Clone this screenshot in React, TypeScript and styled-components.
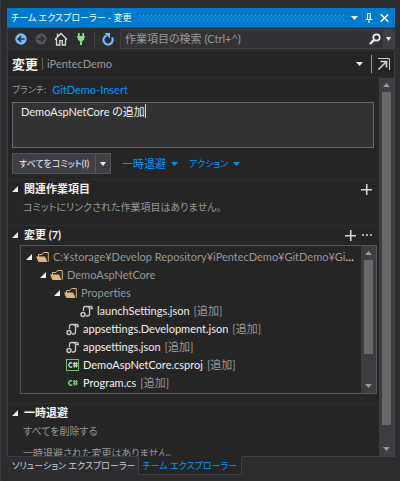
import React, { useEffect, useRef, useState } from "react";
import styled, { createGlobalStyle, css } from "styled-components";

const sans = 'Lato, "Noto Sans CJK JP", sans-serif';

const GlobalStyle = createGlobalStyle`
  *, *::before, *::after { box-sizing: border-box; }
  body {
    margin: 0;
    background: #2d2d30;
    color: #999999;
    font-family: ${sans};
    font-size: 11px;
    line-height: 18px;
    font-feature-settings: "palt";
  }
  button, input, textarea { font: inherit; font-feature-settings: inherit; color: inherit; }
  button { background: none; border: 0; padding: 0; cursor: pointer; }
  a { color: #0097fb; text-decoration: none; }
  ul { list-style: none; margin: 0; padding: 0; }
  h1, h2, p { margin: 0; }
  svg { display: block; flex: none; }
`;

const Page = styled.div`
  display: flex;
  flex-direction: column;
  height: 100vh;
  padding: 8px 5px 5px 6px;
  border-left: 1px solid #3a3a3f;
  white-space: nowrap;
`;

const TitleBar = styled.header`
  display: flex;
  align-items: center;
  gap: 7px;
  height: 20px;
  flex: none;
  padding: 0 6px 0 4px;
  background: #007acc;
  border-bottom: 1px solid #1c5d8c;
  color: #ffffff;
`;

const Title = styled.h1`
  font-size: 9px;
  font-weight: 400;
`;

const Grip = styled.div`
  flex: 1;
  height: 5px;
  background-image: conic-gradient(from 270deg at 1px 1px, #4da3dc 90deg, transparent 0),
    conic-gradient(from 270deg at 1px 1px, #4da3dc 90deg, transparent 0);
  background-size: 4px 4px;
  background-position: 0 0, 2px 2px;
`;

const TitleButtons = styled.div`
  display: flex;
  align-items: center;
  gap: 7px;
`;

const ToolBar = styled.div`
  display: flex;
  align-items: center;
  height: 22px;
  flex: none;
  padding-left: 6px;
  border-left: 1px solid #3f3f46;
`;

const ToolButtons = styled.div`
  display: flex;
  align-items: center;
  gap: 6px;
`;

const Separator = styled.span`
  width: 1px;
  height: 15px;
  background: #46464a;
`;

const SearchBox = styled.label`
  display: flex;
  align-items: center;
  flex: 1;
  min-width: 0;
  height: 20px;
  margin-left: 5px;
  background: #333337;
  border: 1px solid #3f3f46;

  input {
    flex: 1;
    min-width: 0;
    height: 18px;
    padding: 0 4px;
    border: 0;
    outline: 0;
    background: none;
  }
  input::placeholder { color: #999999; opacity: 1; }
`;

const SearchDrop = styled.button`
  display: grid;
  place-items: center;
  width: 11px;
  height: 18px;
  margin-left: 2px;
  background: #3f3f46;
  color: #f1f1f1;
`;

const Body = styled.main`
  display: flex;
  flex-direction: column;
  flex: 1;
  min-height: 0;
  background: #252526;
  border: 1px solid #3f3f46;
  border-top-color: #2d2d30;
`;

const PageHeader = styled.div`
  display: flex;
  align-items: center;
  height: 27px;
  flex: none;
  padding: 0 4px;
  border-bottom: 1px solid #2d2d30;
`;

const PageName = styled.h1`
  font-size: 13px;
  font-weight: 700;
  color: #f1f1f1;
`;

const ProjectName = styled.span`
  font-size: 11px;
`;

const Bar = styled.span`
  width: 1px;
  height: 12px;
  margin: 0 4px;
  background: #66666a;
`;

const HeaderButtons = styled.div`
  display: flex;
  align-items: center;
  gap: 5px;
  margin-left: auto;

  ${Bar} { height: 18px; margin: 0 0 0 3px; background: #999999; }
`;

const Scroller = styled.div`
  display: flex;
  flex: 1;
  min-height: 0;
`;

const Content = styled.div`
  flex: 1;
  min-width: 0;
  overflow: hidden;
`;

const ScrollBar = styled.div`
  display: flex;
  flex-direction: column;
  align-items: center;
  gap: 5px;
  width: 15px;
  flex: none;
  padding: 5px 0;
  background: #3e3e42;
`;

const Track = styled.div`
  flex: 1;
  width: 9px;
`;

const Thumb = styled.div<{ $size: number }>`
  height: ${(p) => p.$size}%;
  background: #686868;
`;

const CommitForm = styled.form`
  display: flex;
  flex-direction: column;
  padding: 3px 5px 5px 4px;
  border-bottom: 1px solid #2d2d30;
`;

const Branch = styled.p`
  display: flex;
  gap: 6px;
`;

const BranchLabel = styled.span`
  font-size: 9px;
`;

const MessageBox = styled.div`
  position: relative;
  margin-top: 3px;
`;

const Message = styled.textarea`
  display: block;
  width: 100%;
  height: 46px;
  padding: 0 8px;
  resize: none;
  outline: 0;
  background: #333333;
  border: 1px solid #686870;
  color: #f1f1f1;
`;

const TextCursor = styled.span`
  position: absolute;
  top: 2px;
  width: 1px;
  height: 14px;
  background: #d8d8d8;

  ${Message}:focus + & { display: none; }
`;

const Actions = styled.div`
  display: flex;
  align-items: center;
  gap: 11px;
  margin-top: 5px;
`;

const SplitButton = styled.div`
  display: flex;
  height: 21px;
  background: #3f3f46;
  border: 1px solid #555555;
  color: #f1f1f1;
`;

const CommitButton = styled.button`
  padding: 0 6px;
  font-size: 9px;
`;

const SplitDrop = styled.button`
  display: grid;
  place-items: center;
  width: 15px;
  border-left: 1px solid #555555;
`;

const MenuButton = styled.button<{ $compact?: boolean }>`
  display: flex;
  align-items: center;
  gap: 5px;
  color: #0097fb;
  font-size: ${(p) => (p.$compact ? 9 : 11)}px;
`;

const Section = styled.section`
  padding: 0 0 9px 4px;

  & + & { border-top: 1px solid #2d2d30; }
`;

const SectionHead = styled.div`
  display: flex;
  align-items: center;
  gap: 6px;
  height: 18px;
  padding-right: 7px;
  color: #f1f1f1;
`;

const SectionName = styled.h2`
  flex: 1;
  font-size: 11px;
  font-weight: 700;
`;

const SectionText = styled.div`
  padding-left: 11px;
  font-size: 10px;

  p + p { margin-top: 4px; }
`;

const TreeBox = styled.div`
  display: flex;
  height: 149px;
  margin: 1px 2px 0 8px;
  border: 1px solid #55555c;
`;

const Tree = styled.ul`
  flex: 1;
  min-width: 0;
  padding: 2px 6px 0 5px;
  overflow: hidden;
`;

const TreeRow = styled.li<{ $level: number; $leaf: boolean }>`
  display: flex;
  align-items: center;
  gap: 4px;
  height: 18px;
  padding-left: ${(p) => p.$level * 14 + (p.$leaf ? 12 : 0)}px;
`;

const ItemName = styled.span`
  min-width: 0;
  overflow: hidden;
  text-overflow: ellipsis;
  color: #f1f1f1;
`;

const FolderName = styled.span`
  color: #999999;
`;

const Tabs = styled.nav`
  display: flex;
  flex: none;
  height: 19px;
`;

const Tab = styled.button<{ $active?: boolean }>`
  height: 18px;
  padding: 0 2px 0 5px;
  font-size: 9px;
  line-height: 16px;
  color: #d0d0d0;
  ${(p) =>
    p.$active &&
    css`
      margin-top: -1px;
      height: 19px;
      padding: 0 4px;
      background: #252526;
      border: 1px solid #3f3f46;
      border-top-color: #252526;
      color: #0097fb;
    `}
`;

const Caret = ({ up = false, color = "currentColor", w = 7 }: { up?: boolean; color?: string; w?: number }) => (
  <svg width={w} height="4" viewBox="0 0 8 4" preserveAspectRatio="none" fill={color}>
    <path d={up ? "M0 4h8L4 0z" : "M0 0h8L4 4z"} />
  </svg>
);

const Expander = () => (
  <svg width="6" height="6" viewBox="0 0 6 6" fill="#f1f1f1">
    <path d="M6 0v6H0z" />
  </svg>
);

const PlusIcon = () => (
  <svg width="11" height="11" viewBox="0 0 11 11" fill="#d8d8d8">
    <path d="M5 0h1.500v5H11v1.500H6.500V11H5V6.500H0V5h5z" />
  </svg>
);

const DotsIcon = () => (
  <svg width="10" height="2" viewBox="0 0 10 2" fill="#a8a8a8">
    <path d="M0 0h2v2H0zM4 0h2v2H4zM8 0h2v2H8z" />
  </svg>
);

const BackIcon = () => (
  <svg width="14" height="14" viewBox="0 0 14 14">
    <circle cx="7" cy="7" r="5.700" fill="#75bdff" />
    <path d="M10.500 7H4.500M7.200 4L4.200 7l3 3" fill="none" stroke="#2d2d30" strokeWidth="1.600" />
  </svg>
);

const ForwardIcon = () => (
  <svg width="14" height="14" viewBox="0 0 14 14">
    <circle cx="7" cy="7" r="5.500" fill="#55555a" />
    <path d="M3.500 7h6M6.800 4l3 3-3 3" fill="none" stroke="#2d2d30" strokeWidth="1.600" />
  </svg>
);

const HomeIcon = () => (
  <svg width="14" height="14" viewBox="0 0 14 14" fill="none" stroke="#d8d8d8" strokeWidth="1.300">
    <path d="M1 7.500L7 1.500l6 6M2.500 7v6h3.300V8.700h2.400V13h3.300V7M3.500 4.500V1.500" />
  </svg>
);

const PlugIcon = () => (
  <svg width="14" height="14" viewBox="0 0 14 14" fill="#8fd98b">
    <path d="M4 1h1.700v3H8.300V1H10v3h1v1.500h-.8v2L8 9.500V13H6V9.500l-2.200-2v-2H3V4h1z" />
  </svg>
);

const RefreshIcon = () => (
  <svg width="14" height="14" viewBox="0 0 14 14">
    <path d="M11 5.500A4.600 4.600 0 1 1 5.500 3.600" fill="none" stroke="#75bdff" strokeWidth="2.100" />
    <path d="M3.500 1H9v5.500z" fill="#75bdff" />
  </svg>
);

const SearchIcon = () => (
  <svg width="12" height="12" viewBox="0 0 12 12" fill="none" stroke="#f1f1f1">
    <circle cx="7.500" cy="4.500" r="3.200" strokeWidth="1.700" />
    <path d="M5 7L1 11" strokeWidth="2.400" />
  </svg>
);

const PinIcon = () => (
  <svg width="8" height="10" viewBox="0 0 8 10" fill="none" stroke="#ffffff">
    <path d="M2.500 6V.5h3V6M5 .5V6M.5 6.500h7M4 7v3" />
  </svg>
);

const CloseIcon = () => (
  <svg width="9" height="8" viewBox="0 0 9 8" fill="none" stroke="#ffffff" strokeWidth="1.600">
    <path d="M.7.3l7.600 7.400M8.300.3L.7 7.700" />
  </svg>
);

const PopOutIcon = () => (
  <svg width="13" height="13" viewBox="0 0 13 13" fill="none" stroke="#cfcfcf">
    <path d="M1 .5h11.500V12" />
    <path d="M1.500 11.500L9 4M3.500 3.500h6v6" strokeWidth="1.700" />
  </svg>
);

const FolderIcon = () => (
  <svg width="13" height="12" viewBox="0 0 13 12">
    <path d="M2.500 6V3.500h3.500L7.500 1.500h4.800v9" fill="none" stroke="#dcb67a" />
    <path d="M0 5.500h9l2.500 5.500H2.500z" fill="#dcb67a" />
  </svg>
);

const JsonIcon = () => (
  <svg width="13" height="13" viewBox="0 0 13 13" fill="none" stroke="#c8c8c8" strokeWidth="1.300">
    <path d="M3.500 6V3Q3.500 1.500 5 1.500h6Q12.300 1.500 12.300 3.500h-2M5.500 1.500Q9.500 1.500 9.500 3.500V9q0 2-2 2H6" />
    <circle cx="3" cy="9.500" r="2" strokeWidth="1.500" />
  </svg>
);

const SharpIcon = ({ boxed }: { boxed: boolean }) => (
  <svg width="13" height="12" viewBox="0 0 13 12" fill="none">
    {boxed && <rect x=".5" y=".5" width="12" height="11" stroke="#6fc36f" />}
    <g stroke={boxed ? "#e8e8e8" : "#7fd67f"} strokeWidth={boxed ? 1.200 : 1.600}>
      <path d="M6.200 4.200A2.200 2.200 0 1 0 6.200 7.800" />
      <path d="M8.300 3v5.500M10.300 3v5.500M6.900 4.700h5M6.900 6.900h5" strokeWidth="1" />
    </g>
  </svg>
);

type Kind = "folder" | "json" | "project" | "csharp";

const items: { name: string; level: number; kind: Kind }[] = [
  { name: "C:¥storage¥Develop Repository¥iPentecDemo¥GitDemo¥GitDemo-Insert", level: 0, kind: "folder" },
  { name: "DemoAspNetCore", level: 1, kind: "folder" },
  { name: "Properties", level: 2, kind: "folder" },
  { name: "launchSettings.json", level: 3, kind: "json" },
  { name: "appsettings.Development.json", level: 2, kind: "json" },
  { name: "appsettings.json", level: 2, kind: "json" },
  { name: "DemoAspNetCore.csproj", level: 2, kind: "project" },
  { name: "Program.cs", level: 2, kind: "csharp" },
];

const ItemIcon = ({ kind }: { kind: Kind }) => {
  if (kind === "folder") return <FolderIcon />;
  if (kind === "json") return <JsonIcon />;
  return <SharpIcon boxed={kind === "project"} />;
};

const Scroll = ({ size }: { size: number }) => (
  <ScrollBar aria-hidden="true">
    <Caret up color="#999999" />
    <Track>
      <Thumb $size={size} />
    </Track>
    <Caret color="#999999" />
  </ScrollBar>
);

// Keeps the insertion mark visible at the end of the text while the box has no focus.
const MessageField = () => {
  const box = useRef<HTMLTextAreaElement>(null);
  const [text, setText] = useState("DemoAspNetCore の追加");
  const [end, setEnd] = useState(0);

  useEffect(() => {
    const pen = document.createElement("canvas").getContext("2d");
    if (!box.current || !pen) return;
    const style = getComputedStyle(box.current);
    pen.font = `${style.fontSize} ${style.fontFamily}`;
    setEnd(Math.round(pen.measureText(text).width) + parseInt(style.paddingLeft, 10) + 1);
  }, [text]);

  return (
    <MessageBox>
      <Message
        ref={box}
        aria-label="コミット メッセージ"
        spellCheck={false}
        value={text}
        onChange={(e) => setText(e.target.value)}
      />
      <TextCursor style={{ left: end }} />
    </MessageBox>
  );
};

export default function App() {
  return (
    <>
      <GlobalStyle />
      <Page>
        <TitleBar>
          <Title>チーム エクスプローラー - 変更</Title>
          <Grip />
          <TitleButtons>
            <button aria-label="ウィンドウの位置"><Caret /></button>
            <button aria-label="自動的に隠す"><PinIcon /></button>
            <button aria-label="閉じる"><CloseIcon /></button>
          </TitleButtons>
        </TitleBar>

        <ToolBar>
          <ToolButtons>
            <button aria-label="戻る"><BackIcon /></button>
            <button aria-label="進む"><ForwardIcon /></button>
            <button aria-label="ホーム"><HomeIcon /></button>
            <button aria-label="接続の管理"><PlugIcon /></button>
            <Separator />
            <button aria-label="最新の情報に更新"><RefreshIcon /></button>
          </ToolButtons>
          <SearchBox>
            <input type="text" aria-label="作業項目の検索" placeholder="作業項目の検索 (Ctrl+^)" />
            <SearchIcon />
            <SearchDrop aria-label="検索オプション"><Caret w={5} /></SearchDrop>
          </SearchBox>
        </ToolBar>

        <Body>
          <PageHeader>
            <PageName>変更</PageName>
            <Bar />
            <ProjectName>iPentecDemo</ProjectName>
            <HeaderButtons>
              <button aria-label="ページの切り替え"><Caret color="#f1f1f1" /></button>
              <Bar />
              <button aria-label="ページをドッキング解除"><PopOutIcon /></button>
            </HeaderButtons>
          </PageHeader>

          <Scroller>
            <Content>
              <CommitForm onSubmit={(e) => e.preventDefault()}>
                <Branch>
                  <BranchLabel>ブランチ:</BranchLabel>
                  <a href="#branch">GitDemo-Insert</a>
                </Branch>
                <MessageField />
                <Actions>
                  <SplitButton>
                    <CommitButton type="submit">すべてをコミット(I)</CommitButton>
                    <SplitDrop type="button" aria-label="コミット オプション"><Caret w={6} /></SplitDrop>
                  </SplitButton>
                  <MenuButton type="button">一時退避 <Caret /></MenuButton>
                  <MenuButton type="button" $compact>アクション <Caret /></MenuButton>
                </Actions>
              </CommitForm>

              <Section>
                <SectionHead>
                  <Expander />
                  <SectionName>関連作業項目</SectionName>
                  <button aria-label="作業項目の追加"><PlusIcon /></button>
                </SectionHead>
                <SectionText>
                  <p>コミットにリンクされた作業項目はありません。</p>
                </SectionText>
              </Section>

              <Section>
                <SectionHead>
                  <Expander />
                  <SectionName>変更 (7)</SectionName>
                  <button aria-label="変更の追加"><PlusIcon /></button>
                  <button aria-label="その他"><DotsIcon /></button>
                </SectionHead>
                <TreeBox>
                  <Tree role="tree" aria-label="変更">
                    {items.map(({ name, level, kind }) => {
                      const file = kind !== "folder";
                      return (
                        <TreeRow
                          key={name}
                          role="treeitem"
                          aria-level={level + 1}
                          $level={level}
                          $leaf={file}
                        >
                          {!file && <Expander />}
                          <ItemIcon kind={kind} />
                          <ItemName>{file ? name : <FolderName>{name}</FolderName>}</ItemName>
                          {file && <span>[追加]</span>}
                        </TreeRow>
                      );
                    })}
                  </Tree>
                  <Scroll size={79} />
                </TreeBox>
              </Section>

              <Section>
                <SectionHead>
                  <Expander />
                  <SectionName>一時退避</SectionName>
                </SectionHead>
                <SectionText>
                  <p>すべてを削除する</p>
                  <p>一時退避された変更はありません。</p>
                </SectionText>
              </Section>
            </Content>
            <Scroll size={95} />
          </Scroller>
        </Body>

        <Tabs>
          <Tab>ソリューション エクスプローラー</Tab>
          <Tab $active>チーム エクスプローラー</Tab>
        </Tabs>
      </Page>
    </>
  );
}
